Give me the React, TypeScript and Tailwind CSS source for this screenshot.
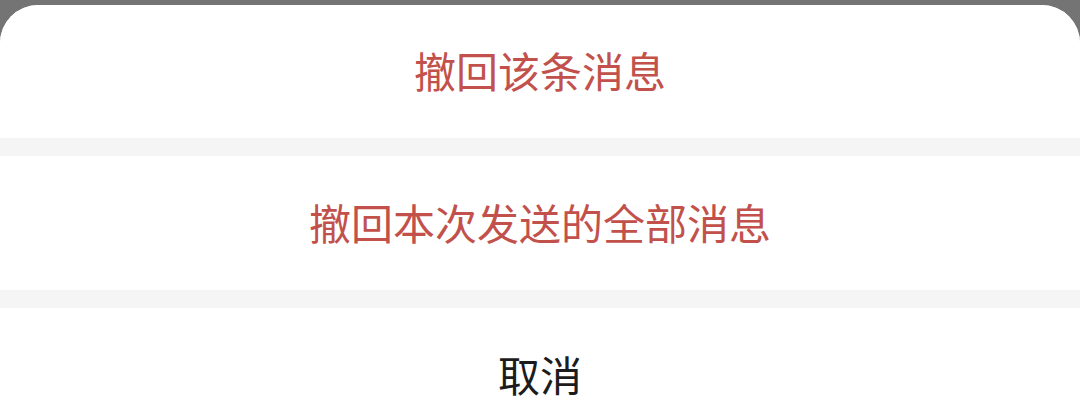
export default function App() {
  return (
    <div
      className="w-[1080px] h-[411px] overflow-hidden bg-[#747474] pt-[5px]"
      style={{ fontFamily: '"Noto Sans CJK SC", "Noto Sans", sans-serif' }}
    >
      <div className="flex flex-col bg-[#f5f5f5] rounded-t-[38px] overflow-hidden">
        <div className="h-[133px] pb-[4px] bg-white flex items-center justify-center text-[42px] text-[#c2514c]">
          撤回该条消息
        </div>
        <div className="h-[18px]" />
        <div className="h-[134px] pb-[4px] bg-white flex items-center justify-center text-[42px] text-[#c2514c]">
          撤回本次发送的全部消息
        </div>
        <div className="h-[18px]" />
        <div className="h-[140px] pb-[10px] bg-white flex items-center justify-center text-[42px] text-[#1c1c1c]">
          取消
        </div>
      </div>
    </div>
  );
}
